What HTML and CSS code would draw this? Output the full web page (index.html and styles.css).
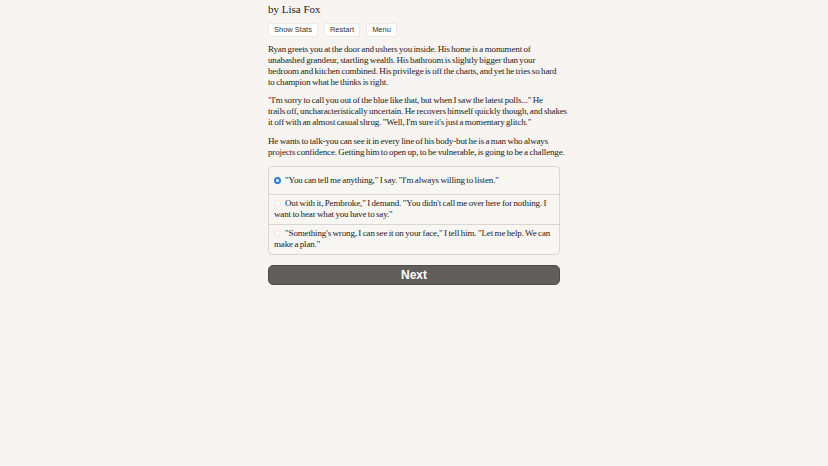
FILE: index.html
```html
<!DOCTYPE html>
<html>
<head>
<meta charset="utf-8">
<link rel="stylesheet" href="styles.css">
</head>
<body>
<main class="page">
  <div class="byline">by Lisa Fox</div>
  <div class="toolbar">
    <button class="tool-btn">Show Stats</button>
    <button class="tool-btn">Restart</button>
    <button class="tool-btn">Menu</button>
  </div>
  <p class="para">Ryan greets you at the door and ushers you inside. His home is a monument of<br>unabashed grandeur, startling wealth. His bathroom is slightly bigger than your<br>bedroom and kitchen combined. His privilege is off the charts, and yet he tries so hard<br>to champion what he thinks is right.</p>
  <p class="para">"I'm sorry to call you out of the blue like that, but when I saw the latest polls..." He<br>trails off, uncharacteristically uncertain. He recovers himself quickly though, and shakes<br>it off with an almost casual shrug. "Well, I'm sure it's just a momentary glitch."</p>
  <p class="para para-last">He wants to talk-you can see it in every line of his body-but he is a man who always<br>projects confidence. Getting him to open up, to be vulnerable, is going to be a challenge.</p>
  <div class="choices">
    <label class="choice first"><span class="radio checked"></span>"You can tell me anything," I say. "I'm always willing to listen."</label>
    <label class="choice"><span class="radio"></span>Out with it, Pembroke," I demand. "You didn't call me over here for nothing. I want to hear what you have to say."</label>
    <label class="choice"><span class="radio"></span>"Something's wrong, I can see it on your face," I tell him. "Let me help. We can make a plan."</label>
  </div>
  <button class="next-btn">Next</button>
</main>
</body>
</html>
```

FILE: styles.css
```css
html, body {
  margin: 0;
  padding: 0;
  background: #f7f4f1;
}
body {
  font-family: "Liberation Serif", "DejaVu Serif", serif;
  color: #232220;
}
.page {
  width: 292px;
  margin: 0 auto;
  padding-top: 2px;
}
.byline {
  font-size: 11px;
  line-height: 14px;
}
.toolbar {
  display: flex;
  gap: 6px;
  margin-top: 7px;
}
.tool-btn {
  font-family: "Liberation Sans", Arial, sans-serif;
  font-size: 7.5px;
  color: #333;
  background: #ffffff;
  border: 1px solid #ece9e5;
  border-radius: 2px;
  padding: 0 5px;
  height: 14px;
  line-height: 12px;
}
.para {
  font-size: 9px;
  letter-spacing: -0.15px;
  word-spacing: -0.6px;
  line-height: 11px;
  margin: 7px -14px 0 0;
}
.para-last {
  margin-top: 8px;
}
.choices {
  margin-top: 8px;
  border: 1px solid #d9d5d0;
  border-radius: 4px;
  background: #f8f6f3;
}
.choice {
  display: block;
  font-size: 9px;
  letter-spacing: -0.15px;
  word-spacing: -0.6px;
  line-height: 11px;
  padding: 3px 5px 4px 5px;
  border-top: 1px solid #d9d5d0;
}
.choice.first {
  border-top: none;
  padding: 8px 5px 8px 5px;
}
.radio {
  display: inline-block;
  width: 7px;
  height: 7px;
  border-radius: 50%;
  border: 1px solid #ebe8e4;
  background: #fbfaf9;
  margin-right: 4px;
  vertical-align: -1px;
  box-sizing: border-box;
}
.radio.checked {
  border: 2px solid #2f7bd6;
  background: #fff;
}
.next-btn {
  display: block;
  width: 100%;
  margin-top: 10px;
  height: 20px;
  border: 1px solid #4e4d4a;
  border-radius: 5px;
  background: #615f5c;
  color: #fff;
  font-family: "Liberation Sans", Arial, sans-serif;
  font-weight: bold;
  font-size: 12px;
}
```
